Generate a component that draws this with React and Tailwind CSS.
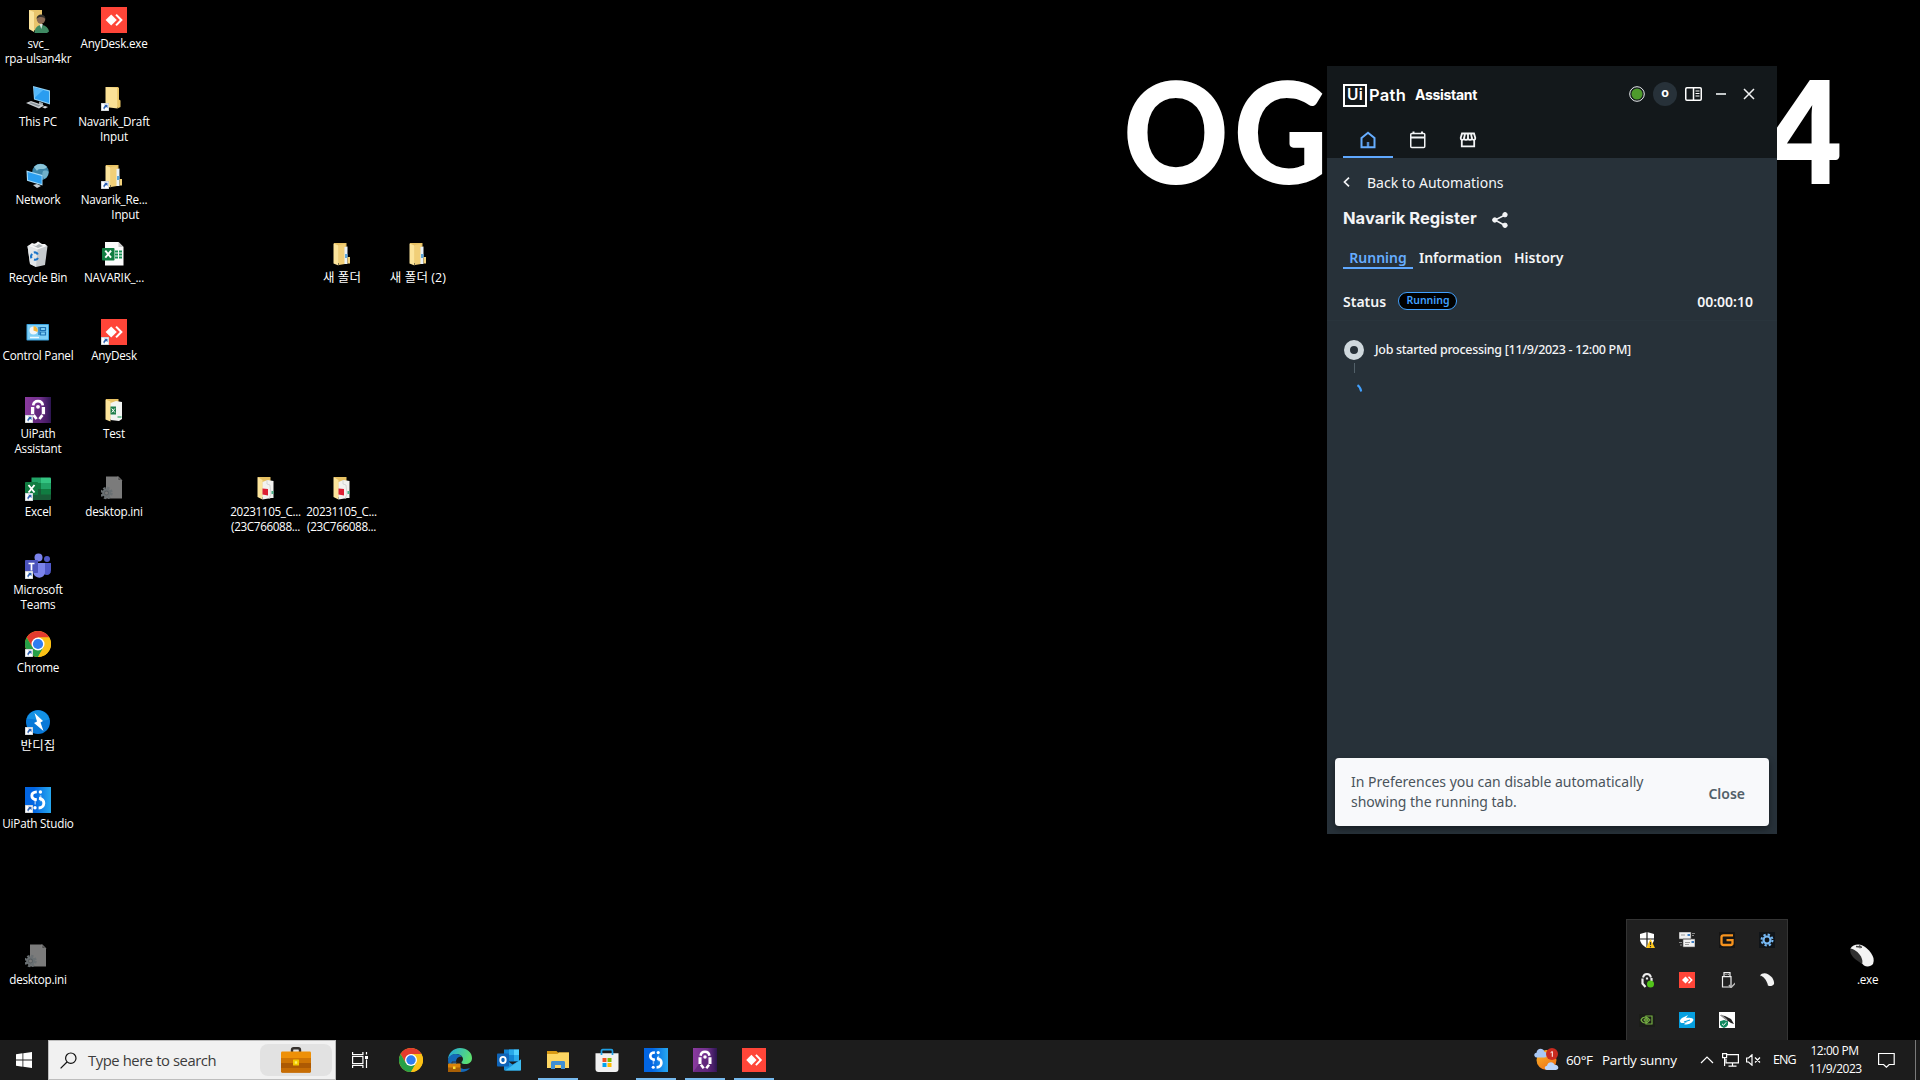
import React from "react";

/* ---------- application icons ---------- */

const AnyDeskIcon = ({ className }) => (
  <svg viewBox="0 0 26 26" className={className}>
    <rect width="26" height="26" fill="#ff4538" />
    <path d="M10.2 7.4 15.8 13l-5.6 5.6L4.6 13z" fill="#fff" />
    <path d="m14.3 8.2 1.5-1.3 6 6.1-6 6.1-1.5-1.3 4.6-4.8z" fill="#fff" />
  </svg>
);

const ChromeIcon = ({ className }) => (
  <svg viewBox="0 0 26 26" className={className}>
    <circle cx="13" cy="13" r="13" fill="#fbc116" />
    <path d="M1.74 6.5A13 13 0 0 1 24.26 6.5H13L7.4 16.2z" fill="#e33b2e" />
    <path d="M1.74 6.5A13 13 0 0 0 13 26l5.6-9.7L13 13 7.4 16.3z" fill="#27a047" />
    <path d="M24.26 6.5H13l5.6 9.8L13 26A13 13 0 0 0 24.26 6.5z" fill="#fbc116" />
    <circle cx="13" cy="13" r="6.5" fill="#fff" />
    <circle cx="13" cy="13" r="5.1" fill="#2f7df0" />
  </svg>
);

const StudioIcon = ({ className }) => (
  <svg viewBox="0 0 26 26" className={className}>
    <defs>
      <linearGradient id="studio" x1="0" x2="1">
        <stop offset="0.35" stopColor="#0265e2" />
        <stop offset="1" stopColor="#27a8f0" />
      </linearGradient>
    </defs>
    <rect width="26" height="26" fill="url(#studio)" />
    <path d="M11.8 4.9C5.2 5.1 5.2 12.2 11.8 12.8" fill="none" stroke="#fff" strokeWidth="2.9" />
    <path d="M14 11.2C20.6 12 20.4 20.8 13.6 21" fill="none" stroke="#fff" strokeWidth="2.9" />
    <path d="M10.2 17.5v-6.2M15.6 8.3v6" stroke="#fff" strokeWidth="1.6" opacity="0.55" />
    <circle cx="15.4" cy="5" r="1.7" fill="#fff" />
    <circle cx="10" cy="20.8" r="1.7" fill="#fff" />
  </svg>
);

const AssistantIcon = ({ className }) => (
  <svg viewBox="0 0 26 26" className={className}>
    <defs>
      <linearGradient id="assist" x1="0" x2="1">
        <stop offset="0" stopColor="#8a3a9e" />
        <stop offset="0.6" stopColor="#70308c" />
        <stop offset="1" stopColor="#2c1550" />
      </linearGradient>
    </defs>
    <rect width="26" height="26" fill="url(#assist)" />
    <path d="M13 9 26 26H0z" fill="#4b1b66" opacity="0.45" />
    <path d="M8.2 8.400C9 2.600 17 2.600 17.800 8.400" fill="none" stroke="#fff" strokeWidth="2.700" />
    <path d="M7.6 10v7.300M18.400 10v7.300" stroke="#fff" strokeWidth="3.300" />
    <path d="M8.600 18.200 11.600 22M17.400 18.200 14.400 22" stroke="#fff" strokeWidth="2.800" />
    <circle cx="13" cy="9.800" r="1.900" fill="#fff" />
  </svg>
);

const UserFolderIcon = ({ className }) => (
  <svg viewBox="0 0 26 26" className={className}>
    <path d="M4 3h13v18l-5 3-8-2z" fill="#e8c46c" />
    <path d="m4 3 5 2v20l-5-3z" fill="#fbe39c" />
    <path d="M9.5 26c0-5 3-8 7-8s7 3 7.500 6.500L22 26z" fill="#3f8a63" />
    <circle cx="16" cy="12.500" r="4.200" fill="#8a6a55" />
    <path d="M11.500 12c0-6 9-6 9 0-2-2-6-3-9 0z" fill="#33302c" />
    <path d="m14.500 17 1.800 5 1.500-5z" fill="#d9e5df" />
  </svg>
);

const ThisPcIcon = ({ className }) => (
  <svg viewBox="0 0 26 26" className={className}>
    <path d="m8 1 17 4.500v14L9 14.500z" fill="#8fd0f5" />
    <path d="m9.200 2.500 14.800 4v11.500l-14-4.300z" fill="#2a9df0" />
    <path d="m9.200 2.500 9 2.500-8.200 7.500z" fill="#55b8fa" />
    <path d="m14 16.500 4 1.400v2.500l-4-1z" fill="#9aa4ab" />
    <path d="m1 18 5-2 13 4.500-5 3z" fill="#c9ced2" />
    <path d="m4 18 2-.8 9.500 3.400-2 1.200z" fill="#8b959c" />
    <path d="m17 22 3-1 3 1-3 1.500z" fill="#d8dcdf" />
  </svg>
);

const NetworkIcon = ({ className }) => (
  <svg viewBox="0 0 26 26" className={className}>
    <circle cx="15.500" cy="9" r="8.300" fill="#3d85a8" />
    <path d="M9 4c3-4 10-4 13 0-3 4-8 0-10 4z" fill="#8cc6da" />
    <path d="M18 8c3-1 5 0 5.500 1-.5 4-2 6-4 7-2-2-3-5-1.500-8z" fill="#6fb0ca" />
    <path d="m1.500 7.500 16 4.500v10.500L2 17.800z" fill="#a7dcf9" />
    <path d="m2.600 9 14 4v8l-13.500-4z" fill="#2b9ff0" />
    <path d="m8 22 4-1 4 2-4 2z" fill="#c5cdd2" />
  </svg>
);

const RecycleIcon = ({ className }) => (
  <svg viewBox="0 0 26 26" className={className}>
    <path d="m2.500 5 9-3 11 3-2.500 19-9 2-6-3z" fill="#c6cacd" />
    <path d="m2.500 5 10 3.500-1.500 17.500-6-3z" fill="#e3e6e8" />
    <path d="m3 5 4-3 3 1 3-2.500 4 2.500h3l2 2-9.500 3.500z" fill="#f4f5f6" />
    <path d="m7 4 4 1 3-2 4 2-5 2z" fill="#adb3b7" />
    <path d="M8.800 11.500a3.400 3.400 0 0 1 4 2M13 17a3.400 3.400 0 0 1-4 1.500M6.500 17.200c-.8-1.500-.5-3 .6-4.300" fill="none" stroke="#1b75c9" strokeWidth="2.100" />
  </svg>
);

const ControlPanelIcon = ({ className }) => (
  <svg viewBox="0 0 26 26" className={className}>
    <rect x="1.500" y="5" width="22.500" height="16.500" rx="0.800" fill="#3ba3df" />
    <rect x="2.500" y="6" width="20.500" height="14.500" fill="#7fd0f7" />
    <circle cx="8.500" cy="11.500" r="4" fill="#f2f7fa" />
    <path d="M8.500 11.500v-4.500a4.500 4.500 0 0 1 4 6z" fill="#f6b53a" />
    <path d="M15.500 8.500h5v3h-5zM15.500 13h5v3h-5zM14 8v8" fill="none" stroke="#1c72b5" strokeWidth="1.200" />
    <path d="M5 18.500h9" stroke="#eefaff" strokeWidth="1.500" />
  </svg>
);

const ExcelIcon = ({ className }) => (
  <svg viewBox="0 0 26 26" className={className}>
    <path d="M6.500 2.500h9.500V14H6.500z" fill="#21a366" />
    <path d="M16 2.500h9a1 1 0 0 1 1 1V8H16z" fill="#33c481" />
    <path d="M16 8h10v6H16z" fill="#21a366" />
    <path d="M6.500 8H16v12H6.500z" fill="#107c41" />
    <path d="M6.500 14H26v10a1 1 0 0 1-1 1H6.500z" fill="#185c37" />
    <path d="M16 14h10v5.500H16z" fill="#107c41" />
    <rect x="0" y="7" width="13" height="13" rx="0.800" fill="#107c41" />
    <path d="m3.500 10 6 7.500M9.500 10l-6 7.500" stroke="#fff" strokeWidth="1.900" />
  </svg>
);

const ExcelFileIcon = ({ className }) => (
  <svg viewBox="0 0 26 26" className={className}>
    <path d="M4 1h13.500L22.500 6v18.500H4z" fill="#fbfbfb" />
    <path d="M17.500 1 22.500 6h-5z" fill="#c9c9c9" />
    <path d="M14 9.500h3v2h-3zm4 0h3v2h-3zM14 12.500h3v2h-3zm4 0h3v2h-3zM14 15.500h3v2h-3zm4 0h3v2h-3z" fill="#169154" />
    <rect x="1" y="7" width="12.500" height="12.500" rx="0.800" fill="#107c41" />
    <path d="m4.300 9.700 5.800 7M10.100 9.700l-5.800 7" stroke="#fff" strokeWidth="1.900" />
  </svg>
);

const TeamsIcon = ({ className }) => (
  <svg viewBox="0 0 26 26" className={className}>
    <circle cx="13.500" cy="4.500" r="4" fill="#7b83eb" />
    <circle cx="22" cy="6" r="3" fill="#5059c9" />
    <path d="M17 10h9v7c0 5-4 6-7 4z" fill="#5059c9" />
    <path d="M8 10h12v9c0 7-10.500 8-12 0z" fill="#7b83eb" />
    <rect x="0" y="7" width="13" height="13" rx="0.800" fill="#4b53bc" />
    <path d="M3.500 10.500h6M6.500 10.500v7" stroke="#fff" strokeWidth="1.700" />
  </svg>
);

const BandizipIcon = ({ className }) => (
  <svg viewBox="0 0 26 26" className={className}>
    <circle cx="13" cy="13" r="12" fill="#0878d8" />
    <path d="M1.500 10A12 12 0 0 1 24.500 10C17 14 8 9 1.500 10z" fill="#1391e4" />
    <path d="m9.500 4 8.500 8-2.500 1.500 3 8.500-9.500-8 3-1.500z" fill="#fff" />
  </svg>
);

const IniIcon = ({ className }) => (
  <svg viewBox="0 0 26 26" className={className}>
    <path d="M5 1.500h12L21 5.500v18H5z" fill="#7b7b7b" />
    <path d="M17 1.500v4h4z" fill="#4a4a4a" stroke="#8c8c8c" strokeWidth="0.600" />
    <circle cx="5.500" cy="18" r="4.900" fill="none" stroke="#6a7073" strokeWidth="2.600" strokeDasharray="2.300 1.550" />
    <circle cx="5.500" cy="18" r="3.400" fill="#565b5e" stroke="#6a7073" strokeWidth="2" />
    <circle cx="5.500" cy="18" r="1.500" fill="#7b7b7b" />
  </svg>
);

const FolderIcon = ({ className, inside }) => (
  <svg viewBox="0 0 26 26" className={className}>
    <path d="M5 2h12.500v20H5z" fill="#e7c163" />
    {!inside && (
      <>
        <path d="m4.500 2 12 .8v20.700l-12-1.500z" fill="#fbe196" />
        <path d="M16.500 3h1.500v11.500l1.500 1V22l-3 1.500z" fill="#e9c566" />
      </>
    )}
    {inside === "zip" && (
      <>
        <path d="m4.500 2.500 5 2v20l-5-2z" fill="#fce49b" />
        <path d="m10 4 6-1v20l-6 1z" fill="#f1cf78" />
        <path d="m15.500 6 3-.5V23h-3z" fill="#e9f2f8" />
        <path d="M16 13h2.500v4H16z" fill="#5ca7dc" />
        <path d="M18.500 16H21v6.500h-2.500z" fill="#f3d27b" />
      </>
    )}
    {inside === "pdf" && (
      <>
        <path d="m4.500 2 5 3v19.500l-5-2.500z" fill="#fce49b" />
        <path d="m9.500 7 5-2 6 1v17h-2l-9 1.500z" fill="#f2f2f0" />
        <path d="M14 5v4l3 1 1 9-2 5" fill="none" stroke="#c9cbca" strokeWidth="0.700" />
        <path d="M9.500 13.500 15 14v6.500l-5.500-1z" fill="#dc1f33" />
        <path d="M18.500 16h2v3h-2z" fill="#4db28b" />
      </>
    )}
    {inside === "xls" && (
      <>
        <path d="m4.500 2.500 5 2v20l-5-2z" fill="#fce49b" />
        <path d="M9.500 6 15 4l6 1v17l-3 2-8.500-1z" fill="#f2f4f2" />
        <rect x="9.500" y="9.500" width="5.500" height="8" fill="#1d7d4a" />
        <path d="m10.800 11.500 3 4M13.800 11.500l-3 4" stroke="#fff" strokeWidth="1" />
        <path d="M16.500 19h4v2h-4z" fill="#7cc39c" />
      </>
    )}
  </svg>
);

const ZipFolder = (p) => <FolderIcon inside="zip" {...p} />;
const PdfFolder = (p) => <FolderIcon inside="pdf" {...p} />;
const XlsFolder = (p) => <FolderIcon inside="xls" {...p} />;

const MouseIcon = ({ className }) => (
  <svg viewBox="0 0 26 26" className={className}>
    <path d="M1.500 5.500C3.500 2 9 .3 13.500 2.500c3 1.500 6 4 8.500 7.500 2.500 3.500 3.500 7 2 11-2 2.500-6 3.200-9 1.500L5 12z" fill="#f3f3f3" />
    <path d="M1.500 5.500c3 .3 8 3.500 10.500 8 1.500 3 1.800 5.500 1 7.500L6 16C1.500 12 .5 8 1.500 5.500z" fill="#303030" />
    <path d="m7 3.500 6 .8M10.500 2.300l.8 3" stroke="#444" strokeWidth="1.400" />
  </svg>
);

const Shortcut = () => (
  <svg viewBox="0 0 8 8" className="absolute bottom-0 left-0 size-2">
    <rect width="8" height="8" fill="#b9c1c9" />
    <rect x="0.600" y="0.600" width="6.800" height="6.800" fill="#fff" />
    <path d="M3 1.700h3.500v3.500L5.400 4.100C4 4.900 3.500 5.600 3.200 6.800 1.600 5 2.500 3.600 4.100 2.800z" fill="#2b5fb0" />
  </svg>
);

/* ---------- desktop ---------- */

const columns = [
  {
    place: "left-0",
    items: [
      { icon: UserFolderIcon, lines: ["svc_", "rpa-ulsan4kr"] },
      { icon: ThisPcIcon, lines: ["This PC"] },
      { icon: NetworkIcon, lines: ["Network"] },
      { icon: RecycleIcon, lines: ["Recycle Bin"] },
      { icon: ControlPanelIcon, lines: ["Control Panel"] },
      { icon: AssistantIcon, lines: ["UiPath", "Assistant"], link: true },
      { icon: ExcelIcon, lines: ["Excel"], link: true },
      { icon: TeamsIcon, lines: ["Microsoft", "Teams"], link: true },
      { icon: ChromeIcon, lines: ["Chrome"], link: true },
      { icon: BandizipIcon, lines: ["반디집"], link: true, korean: true },
      { icon: StudioIcon, lines: ["UiPath Studio"], link: true },
      null,
      { icon: IniIcon, lines: ["desktop.ini"] },
    ],
  },
  {
    place: "left-[76px]",
    items: [
      { icon: AnyDeskIcon, lines: ["AnyDesk.exe"] },
      { icon: FolderIcon, lines: ["Navarik_Draft", "Input"], link: true },
      { icon: ZipFolder, lines: ["Navarik_Re...", "\u00a0\u00a0\u00a0\u00a0\u00a0\u00a0\u00a0\u00a0Input"], link: true },
      { icon: ExcelFileIcon, lines: ["NAVARIK_..."] },
      { icon: AnyDeskIcon, lines: ["AnyDesk"], link: true },
      { icon: XlsFolder, lines: ["Test"] },
      { icon: IniIcon, lines: ["desktop.ini"] },
    ],
  },
  {
    place: "left-[228px]",
    items: [null, null, null, null, null, null, { icon: PdfFolder, lines: ["20231105_C...", "(23C766088..."], digits: true }],
  },
  {
    place: "left-[304px]",
    items: [
      null,
      null,
      null,
      { icon: ZipFolder, lines: ["새 폴더"], korean: true },
      null,
      null,
      { icon: PdfFolder, lines: ["20231105_C...", "(23C766088..."], digits: true },
    ],
  },
  { place: "left-[380px]", items: [null, null, null, { icon: ZipFolder, lines: ["새 폴더 (2)"], korean: true }] },
];

function labelSpacing(item) {
  if (item.korean) return "text-[12.5px] tracking-[0.1px]";
  if (item.digits) return "text-[11.7px] tracking-[-0.36px] pr-px";
  return "text-[11.7px] tracking-[-0.22px]";
}

function DesktopItem({ item }) {
  if (!item) return <div className="h-[78px]" />;
  const Icon = item.icon;
  return (
    <div className="flex h-[78px] flex-col items-center pt-[7px]">
      <div className="relative size-[26px]">
        <Icon className="size-[26px]" />
        {item.link && <Shortcut />}
      </div>
      <div className={"mt-[3px] text-center leading-[15px] whitespace-pre text-white " + labelSpacing(item)}>
        {item.lines.map((l) => (
          <div key={l}>{l}</div>
        ))}
      </div>
    </div>
  );
}

/* ---------- assistant window ---------- */

function TitleBar() {
  return (
    <div className="flex h-14 items-center pl-4">
      <div className="mt-0.5 flex items-center font-[Inter] leading-none text-white">
        <div className="flex h-[23px] w-6 items-center justify-center border-2 border-white text-[15.5px] font-semibold tracking-[0.2px]">Ui</div>
        <div className="ml-0.5 w-[37px] text-[16.5px] font-semibold tracking-[0.3px]">Path</div>
        <div className="ml-[9px] text-[14px] font-bold tracking-[-0.3px]">Assistant</div>
      </div>
      <div className="mr-[22px] ml-auto flex items-center">
        <svg viewBox="0 0 16 16" className="size-4">
          <circle cx="8" cy="8" r="7.300" fill="#13181b" stroke="#e8ecee" strokeWidth="1" />
          <circle cx="8" cy="8" r="5.500" fill="#4e9a2c" />
        </svg>
        <div className="ml-2 flex size-6 items-center justify-center rounded-full bg-[#273139] pb-0.5 font-[Inter] text-[12.5px] leading-none font-bold text-white">o</div>
        <svg viewBox="0 0 17 14" className="ml-2 h-3.5 w-[17px]" fill="none" stroke="#fff" strokeWidth="1.500">
          <rect x="0.750" y="0.750" width="15.500" height="12.500" rx="1.200" />
          <path d="M8.500 1v12" />
          <path d="M10.500 4h4M10.500 6.500h4M10.500 9h4" strokeWidth="1.200" />
        </svg>
        <div className="ml-[14px] h-0.5 w-2.5 bg-[#c3c7c9]" />
        <svg viewBox="0 0 12 12" className="ml-[17px] size-3" stroke="#f1f2f3" strokeWidth="1.500">
          <path d="m1 1 10 10M11 1 1 11" />
        </svg>
      </div>
    </div>
  );
}

function NavTabs() {
  return (
    <div className="flex h-9 pl-4">
      <div className="flex w-[50px] items-center justify-center border-b-2 border-[#5fa8ff] pt-0.5 pr-px">
        <svg viewBox="0 0 18 18" className="size-[18px]" fill="none" stroke="#66adff" strokeWidth="2">
          <path d="M2.500 7 9 1.800 15.500 7v9.300h-13z" />
          <path d="M9 11v5" strokeWidth="2.500" opacity="0.800" />
        </svg>
      </div>
      <div className="flex w-[50px] items-center justify-center">
        <svg viewBox="0 0 18 18" className="size-[18px]" fill="none" stroke="#f4f5f7" strokeWidth="1.500">
          <rect x="1.750" y="2.500" width="14" height="14" rx="1" />
          <path d="M2 6.500h13.500M4.500 0.500v2M13 0.500v2" strokeWidth="2" />
        </svg>
      </div>
      <div className="flex w-[50px] items-center justify-center">
        <svg viewBox="0 0 18 18" className="size-[18px]" fill="none" stroke="#f4f5f7" strokeWidth="1.800">
          <path d="M3 2.500h12L16.300 7c.2 2-2.300 2.500-3.300.8-.8 1.400-3.200 1.400-4 0-.8 1.400-3.200 1.400-4 0C4 9.500 1.500 9 1.700 7z" />
          <path d="M6 3 5 7.500M9 3v5M12 3l1 4.500M2.800 9v6.300h12.400V9" />
        </svg>
      </div>
    </div>
  );
}

function AssistantWindow() {
  return (
    <section className="absolute top-[66px] left-[1327px] flex h-[768px] w-[450px] flex-col bg-[#273139] font-['Noto_Sans',sans-serif] text-[#f4f5f7]">
      <header className="h-[92px] bg-[#13181b]">
        <TitleBar />
        <NavTabs />
      </header>

      <div className="flex h-12 items-center pl-4">
        <svg viewBox="0 0 7 10" className="h-2.5 w-[7px]" fill="none" stroke="#f4f5f7" strokeWidth="1.700">
          <path d="M6 .7 1.500 5 6 9.300" />
        </svg>
        <span className="mt-0.5 ml-[17px] text-sm">Back to Automations</span>
      </div>

      <div className="flex h-6 items-center pl-4">
        <h1 className="w-[134px] font-[Inter] text-[16.500px] leading-6 font-bold tracking-[0.04px] whitespace-nowrap">Navarik Register</h1>
        <svg viewBox="0 0 16 16" className="mt-1 ml-[15px] size-4" fill="#f4f5f7" stroke="#f4f5f7">
          <path d="M13 3 3 8l10 5.500" fill="none" strokeWidth="1.500" />
          <circle cx="13" cy="2.700" r="2.200" />
          <circle cx="2.800" cy="8" r="2.200" />
          <circle cx="13" cy="13.300" r="2.200" />
        </svg>
      </div>

      <nav className="mt-[9px] flex h-[30px] pl-4 text-sm leading-5 font-semibold">
        <div className="flex w-[70px] justify-center border-b-2 border-[#5fa8ff] pt-[9px] text-[#66adff]">Running</div>
        <div className="ml-1.5 w-[84px] pt-[9px]">Information</div>
        <div className="ml-[11px] pt-[9px]">History</div>
      </nav>

      <div className="mt-[13px] flex h-[39px] items-center border-b border-[#29343c] pr-6 pl-4 text-sm font-semibold">
        <span className="mt-0.5 w-[43px]">Status</span>
        <span className="mb-px ml-3 flex h-[18px] w-[59px] items-center justify-center rounded-full border border-[#42a1ff] bg-black pb-px pl-px text-[10.500px] leading-none text-[#42a1ff]">Running</span>
        <span className="mt-0.5 ml-auto">00:00:10</span>
      </div>

      <div className="mt-[17px] flex items-center pl-[17px]">
        <div className="size-5 rounded-full border-6 border-[#cfd8dd]" />
        <span className="ml-[11px] text-[12.500px] leading-6 font-medium tracking-[-0.3px] whitespace-nowrap">Job started processing [11/9/2023 - 12:00 PM]</span>
      </div>
      <div className="mt-px ml-[27px] h-2.5 w-px bg-[#526069]" />
      <svg viewBox="0 0 8 9" className="mt-[11px] ml-[29px] h-[9px] w-2" fill="none" stroke="#42a1ff" strokeWidth="2">
        <path d="M1.500 1.200C3.500 2.500 4.800 4.500 5.200 7.500" />
      </svg>

      <div className="mx-2 mt-auto mb-2 flex h-[68px] items-center justify-between rounded bg-[#f8f9fb] pr-6 pl-4 text-sm leading-5 text-[#526069] shadow-[0_3px_6px_rgba(0,0,0,0.4)]">
        <p className="text-[#4a545b]">
          In Preferences you can disable automatically
          <br />
          showing the running tab.
        </p>
        <button className="mt-1 font-semibold">Close</button>
      </div>
    </section>
  );
}

/* ---------- tray flyout ---------- */

const trayIcons = [
  <>
    <path d="M8 0 15 2v5c0 4-3 7-7 9-4-2-7-5-7-9V2z" fill="#fff" />
    <path d="M8 0v16M1 7h14" stroke="#202020" strokeWidth="1.200" />
    <path d="M11.500 7 16 16H7z" fill="#fcc419" />
    <path d="M11.500 10v3M11.500 14v1.200" stroke="#333" strokeWidth="1.200" />
  </>,
  <>
    <path d="M0 0h12v7H0zM4 7h12v8H4z" fill="#f2f2f2" stroke="#555" strokeWidth="0.600" />
    <path d="M2 3h4M6 10.500h5M6 12.500h4" stroke="#9a9a9a" />
    <path d="M8.500 2H11v2H8.500zM12.500 9H15v2h-2.500z" fill="#3f7fc4" />
    <path d="M13 1.500h3M13 3.500h2M0 10.500h3M1 13h2" stroke="#888" />
  </>,
  <>
    <rect width="16" height="16" fill="#151515" />
    <path d="M14 3.300H4.500C3 3.300 2.500 4 2.500 5v6c0 1.200.5 2 2 2h7c1.200 0 2-.6 2-2V8.200H7.500" fill="none" stroke="#f7931e" strokeWidth="2.300" />
  </>,
  <>
    <rect width="16" height="16" fill="#101418" />
    <circle cx="8" cy="8" r="5.500" fill="none" stroke="#77b9f4" strokeWidth="2" strokeDasharray="2.300 2.020" />
    <circle cx="8" cy="8" r="3.500" fill="none" stroke="#77b9f4" strokeWidth="2.200" />
  </>,
  <>
    <path d="M4 5.500C5 .8 11 .8 12 5.500" fill="none" stroke="#eee" strokeWidth="2" />
    <path d="M3.500 6.500v5l3 3.500M8 5.500v2M12.500 6v3" stroke="#eee" strokeWidth="2.200" fill="none" />
    <circle cx="11.500" cy="12" r="3.500" fill="#52c41a" />
  </>,
  <>
    <rect width="16" height="16" fill="#ff4538" />
    <path d="M6.500 4.500 10 8l-3.500 3.500L3 8z" fill="#fff" />
    <path d="m9.500 4.800 3.200 3.200-3.200 3.200" fill="none" stroke="#fff" strokeWidth="1.500" />
  </>,
  <>
    <path d="M5 .6h6v4H5zM3.500 4.600h8.500V15h-8.500z" fill="none" stroke="#eee" strokeWidth="1.200" />
    <path d="M6.500 2.500h1M8.700 2.500h1" stroke="#eee" />
    <path d="m10 13 2 2.500 4.500-4.500" fill="none" stroke="#bbb" strokeWidth="1.500" />
  </>,
  <>
    <path d="M1 3.500C2.500 1.300 6 .5 9 2.200c4 2.300 6.500 6 6 9.800-1.500 2.300-4 2.500-6 1.500z" fill="#f3f3f3" />
    <path d="M1 3.500c3 .5 6.500 4 8 9.800C6 11.500 2 8 1 3.500z" fill="#252525" />
  </>,
  <>
    <rect y="2" width="16" height="13" fill="#1b1d19" />
    <path d="M7 4h6v8H7zM2 8c2-4 6-4 9 0-3 4-7 4-9 0zm3 0c1-2 3-2 4 0-1 2-3 2-4 0z" fill="none" stroke="#76b043" strokeWidth="1.200" />
  </>,
  <>
    <rect width="16" height="16" fill="#069fdf" />
    <path d="M1 9c0-3 5-4 8-6l-2 3c4-1 9 0 7 3-3 4-8 4-9 3l3-2c-3 1-7 2-7-1z" fill="#fff" />
    <path d="m5 10 6-2" stroke="#069fdf" strokeWidth="1.200" />
  </>,
  <>
    <rect width="16" height="16" fill="#fff" />
    <path d="M1 3 6 4l6 3 3 5-3-1-6-4z" fill="#222" />
    <path d="m2 3 6 5" stroke="#999" strokeWidth="1.500" />
    <path d="m5 8 4 1.200v3c0 1.500-2 3-4 3.800-2-.8-4-2.300-4-3.800v-3z" fill="#128a61" />
    <path d="m3 11.800 1.600 1.500 2.600-3" fill="none" stroke="#fff" />
  </>,
];

function TrayFlyout() {
  return (
    <div className="absolute top-[919px] left-[1626px] grid h-[122px] w-[162px] auto-rows-[40px] grid-cols-4 border border-[#343434] bg-[#202020]">
      {trayIcons.map((art, i) => (
        <div key={i} className="flex items-center justify-center">
          <svg viewBox="0 0 16 16" className="size-4">{art}</svg>
        </div>
      ))}
    </div>
  );
}

/* ---------- taskbar ---------- */

const EdgeIcon = ({ className }) => (
  <svg viewBox="0 0 24 24" className={className}>
    <defs>
      <linearGradient id="edge" x1="0" y1="0" x2="1" y2="0.300">
        <stop offset="0" stopColor="#1fa5e4" />
        <stop offset="1" stopColor="#5bdf72" />
      </linearGradient>
    </defs>
    <path d="M12 0c7 0 12 4.500 12 10 0 4-3 6-6.500 6-2 0-4-.6-4-1.600 0-.8 1.500-1.200 1.500-3.400 0-2.500-3-5-6.500-5C4 6 .5 9 0 12 0 5 5.500 0 12 0z" fill="url(#edge)" />
    <path d="M0 12c.5-4 4-6 8-6 3 0 5 1 6 3-4-1-6 2-6 5 0 5 5 7 9 7 3 0 4-1 5-1-2 2.500-5 4-9 4C5 24 0 18.500 0 12z" fill="#1468b8" />
    <rect x="0" y="15.500" width="12.500" height="8.500" rx="0.700" fill="#d98209" />
    <path d="M0 19.500h12.500V24H0z" fill="#a85f06" />
    <path d="M4 15.500v-1.500h4.500v1.500" fill="none" stroke="#333" />
    <rect x="5" y="18.500" width="2.500" height="2.500" fill="#ffdb2d" />
  </svg>
);

const OutlookIcon = ({ className }) => (
  <svg viewBox="0 0 24 24" className={className}>
    <path d="M7 1.500h15v12H7z" fill="#1183d3" />
    <path d="M17 1.500h5v5.500h-5z" fill="#50d0ff" />
    <path d="M12 1.500h5V7h-5zM17 7h5v6h-5z" fill="#28a8ea" />
    <path d="M7 10.500v11c0 .6.300 1 1 1h15c.6 0 1-.4 1-1v-10l-8.500 5z" fill="#1a93dd" />
    <path d="m24 11.500-16 11h15c.6 0 1-.4 1-1z" fill="#3fbcf0" />
    <rect x="0" y="5.500" width="12" height="13" rx="0.800" fill="#0f64b8" />
    <ellipse cx="6" cy="12" rx="2.700" ry="3.100" fill="none" stroke="#fff" strokeWidth="1.900" />
  </svg>
);

const ExplorerIcon = ({ className }) => (
  <svg viewBox="0 0 24 24" className={className}>
    <path d="M1 3h9.500l1.500 1.500h11V9H1z" fill="#d99a14" />
    <path d="M1 6h10.500l1.500-1.500h10V20H1z" fill="#fdd663" />
    <path d="M5 21v-6.500c0-.8.500-1.500 1.500-1.500h11c1 0 1.500.7 1.500 1.500V21h-4v-4H9v4z" fill="#3f8fd4" />
  </svg>
);

const StoreIcon = ({ className }) => (
  <svg viewBox="0 0 24 24" className={className}>
    <path d="M6.500 6V3c0-.8.400-1.300 1.200-1.300h8.600c.8 0 1.200.5 1.200 1.300v3" fill="none" stroke="#1f9fe4" strokeWidth="1.700" />
    <path d="M.500 5.200h23V21c0 1.800-1 3-3 3h-17c-2 0-3-1.200-3-3z" fill="#f1f1f1" />
    <path d="M7.500 10h4v4h-4z" fill="#f25022" />
    <path d="M12.500 10h4v4h-4z" fill="#7fba00" />
    <path d="M7.500 15h4v4h-4z" fill="#00a4ef" />
    <path d="M12.500 15h4v4h-4z" fill="#ffb900" />
    <path d="M6.500 5v2M17.500 5v2" stroke="#1f9fe4" strokeWidth="1.700" />
  </svg>
);

const apps = [
  { icon: ChromeIcon },
  { icon: EdgeIcon },
  { icon: OutlookIcon },
  { icon: ExplorerIcon, open: true },
  { icon: StoreIcon },
  { icon: StudioIcon, open: true },
  { icon: AssistantIcon, open: true },
  { icon: AnyDeskIcon, open: true },
];

function Taskbar() {
  return (
    <footer className="absolute inset-x-0 bottom-0 flex h-10 items-center bg-[#1c1c1c] text-white">
      <div className="flex w-12 justify-center">
        <svg viewBox="0 0 16 16" className="size-4" fill="#fff">
          <path d="M0 2.200 6.500 1.300v6.300H0zM7.300 1.200 16 0v7.600H7.300zM0 8.400h6.500v6.300L0 13.800zM7.300 8.400H16V16l-8.700-1.200z" />
        </svg>
      </div>

      <div className="flex h-10 w-72 items-center border border-[#bdbdbd] bg-[#f1f1f1] pl-[11px]">
        <svg viewBox="0 0 17 17" className="size-[17px]" fill="none" stroke="#111" strokeWidth="1.200">
          <circle cx="10.800" cy="6.200" r="5.200" />
          <path d="M7 10 .6 16.400" />
        </svg>
        <span className="ml-[11px] w-32 text-[14.800px] tracking-[-0.420px] whitespace-nowrap text-[#3c3c3c]">Type here to search</span>
        <div className="mr-[3px] ml-auto flex h-8 w-[72px] items-center justify-center rounded-lg bg-[#e2e2e2]">
          <svg viewBox="0 0 30 26" className="h-[26px] w-[30px]">
            <path d="M11 5V3c0-1 .7-1.700 1.700-1.700h4.600c1 0 1.700.7 1.700 1.700v2" fill="none" stroke="#35302c" strokeWidth="2.400" />
            <rect y="4.500" width="30" height="21" rx="1.200" fill="#ee9007" />
            <path d="M0 11h30v5H0z" fill="#cf7504" />
            <path d="M0 16h30v8.300c0 .7-.5 1.200-1.200 1.200H1.200C.5 25.500 0 25 0 24.300z" fill="#ad5a03" />
            <path d="M0 21h30v3.300c0 .7-.5 1.200-1.200 1.200H1.200C.5 25.500 0 25 0 24.300z" fill="#c76d04" />
            <rect x="12" y="12.500" width="6" height="6" rx="0.600" fill="#f2c800" />
            <rect x="13.800" y="14.300" width="2.400" height="2.400" fill="#ffee6a" />
          </svg>
        </div>
      </div>

      <div className="ml-4 size-4">
        <svg viewBox="0 0 16 16" className="size-4" fill="none" stroke="#fff" strokeWidth="1.200">
          <path d="M.6 0v2.600h10.300V0M.6 16v-2.600h10.300V16M.6 4.500h10.300v7H.6zM14.500 0v2.500M14.500 7.500V16" />
          <path d="M13 4h3v3h-3z" fill="#fff" stroke="none" />
        </svg>
      </div>

      <div className="ml-[23px] flex gap-[9px]">
        {apps.map(({ icon: Icon, open }, i) => (
          <div key={i} className={"flex h-10 w-10 items-center justify-center " + (open ? "shadow-[inset_0_-2px_0_#76b9ed]" : "")}>
            <Icon className="size-6" />
          </div>
        ))}
      </div>

      <div className="ml-auto flex h-10 items-center">
        <svg viewBox="0 0 26 24" className="h-6 w-[26px]">
          <defs>
            <linearGradient id="sun" x1="0" y1="0" x2="0.600" y2="1">
              <stop offset="0" stopColor="#fdb92b" />
              <stop offset="1" stopColor="#ee7516" />
            </linearGradient>
          </defs>
          <circle cx="12.500" cy="12" r="10" fill="url(#sun)" />
          <path d="M2.500 9.500c-3-.5-3-4.500 0-4.800C3-.5 9.500-.5 10.500 4c3.500 0 4 5 0 5.500z" fill="#a9c8f5" />
          <path d="M13 22c-3-.4-3-3.800 0-4.200.8-4.500 6.600-4.500 7.500-1 4-.5 5.500 4.700 1.500 5.200z" fill="#bcd6fa" />
          <circle cx="18" cy="6" r="6" fill="#c92b20" />
          <path d="m16.600 4.700 1.700-1.200v5.300" fill="none" stroke="#fff" />
        </svg>
        <span className="ml-1.5 w-[27px] text-[13.500px] tracking-[-0.4px]">60°F</span>
        <span className="ml-[9px] w-[75px] text-[13.500px] tracking-[-0.250px] whitespace-nowrap">Partly sunny</span>
        <svg viewBox="0 0 14 8" className="ml-[23px] h-2 w-3.5" fill="none" stroke="#fff" strokeWidth="1.200">
          <path d="m1 7 6-6 6 6" />
        </svg>
        <svg viewBox="0 0 17 14" className="ml-2 h-3.5 w-[17px]" fill="none" stroke="#fff" strokeWidth="1.200">
          <path d="M5 1.600h11.400v8.300H4V6M10.500 10v3M6.500 13.200h8" />
          <path d="M.600 .6h4v4h-4zM2.600 4.600V13" />
        </svg>
        <svg viewBox="0 0 15 12" className="ml-[7px] h-3 w-[15px]" fill="none" stroke="#fff" strokeWidth="1.200">
          <path d="M.600 4v4h2L6 11.200V.800L2.600 4zM9 3.500l5 5M14 3.500l-5 5" />
        </svg>
        <span className="ml-3 w-[23px] text-[12.500px] tracking-[-0.900px]">ENG</span>
        <div className="ml-[13px] w-[51px] text-center text-[12px] leading-[18px] tracking-[-0.450px] whitespace-nowrap">
          12:00 PM
          <br />
          11/9/2023
        </div>
        <svg viewBox="0 0 17 16" className="mr-5 ml-[18px] h-4 w-[17px]" fill="none" stroke="#fff" strokeWidth="1.200">
          <path d="M.600 1.500h15.600v11h-5L8.400 15.200 5.600 12.500h-5z" />
        </svg>
        <div className="mr-1 h-10 w-px bg-[#7a7a7a]" />
      </div>
    </footer>
  );
}

export default function App() {
  return (
    <main className="relative h-[1080px] w-[1920px] overflow-hidden bg-black font-['Open_Sans','Noto_Sans_CJK_KR',sans-serif]">
      <div className="absolute top-[49px] left-[1123px] origin-left scale-x-[0.92] font-[Lato] text-[142px] leading-[160px] font-black tracking-[5px] text-white">OG</div>
      <div className="absolute top-[49px] right-[78px] origin-right scale-x-[0.93] font-[Lato] text-[142px] leading-[160px] font-extrabold text-white">4</div>

      {columns.map((c) => (
        <div key={c.place} className={"absolute top-0 w-[76px] " + c.place}>
          {c.items.map((item, i) => (
            <DesktopItem key={i} item={item} />
          ))}
        </div>
      ))}
      <div className="absolute top-[936px] left-[1824px] w-[76px]">
        <DesktopItem item={{ icon: MouseIcon, lines: ["\u00a0\u00a0\u00a0\u00a0.exe"] }} />
      </div>

      <AssistantWindow />
      <TrayFlyout />
      <Taskbar />
    </main>
  );
}
